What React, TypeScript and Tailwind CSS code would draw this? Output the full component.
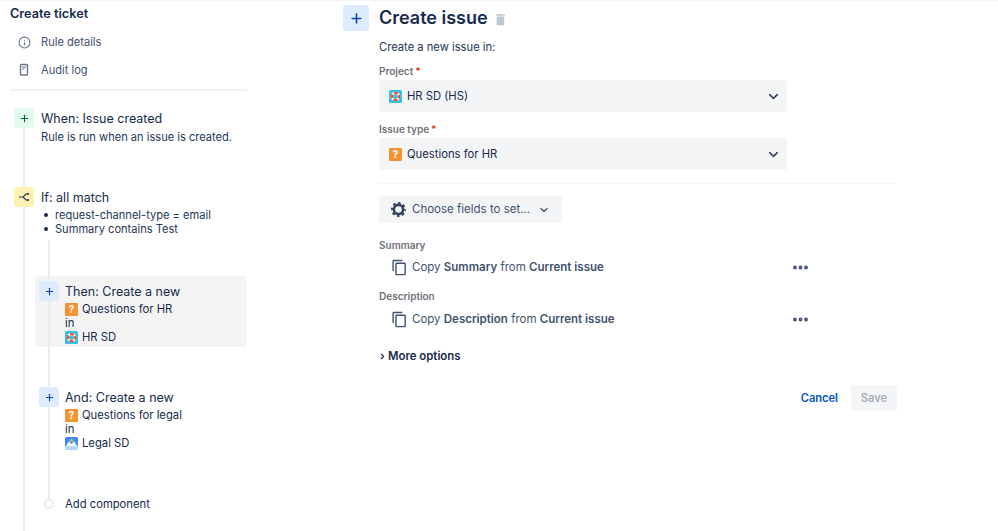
import { ChevronDown, ChevronRight, Info, MoreHorizontal, Plus } from "lucide-react";
import { MdContentCopy, MdDelete } from "react-icons/md";

const LifebuoyIcon = ({ size = 13 }: { size?: number }) => (
    <svg width={size} height={size} viewBox="0 0 16 16" className="shrink-0">
        <rect width="16" height="16" rx="2" fill="#2cc3e6" />
        <circle cx="8" cy="8" r="4.4" fill="none" stroke="#ffffff" strokeWidth="3" />
        <circle cx="8" cy="8" r="4.4" fill="none" stroke="#f0533f" strokeWidth="3" strokeDasharray="4.9 2" strokeDashoffset="2.45" />
    </svg>
);

const QuestionIcon = () => (
    <span className="flex h-[13px] w-[13px] shrink-0 items-center justify-center rounded-[1px] bg-[#f79232] text-[10px] font-bold leading-none text-white">
        ?
    </span>
);

const MountainIcon = () => (
    <svg width="13" height="13" viewBox="0 0 16 16" className="shrink-0">
        <rect width="16" height="16" rx="2" fill="#3d8bf5" />
        <circle cx="8" cy="4" r="1.5" fill="#f5cd47" />
        <path d="M0 13 L5 5 L8 9 L11 5 L16 13 V16 H0 Z" fill="#ffffff" />
        <path d="M0 11 H16 V14 a2 2 0 0 1 -2 2 H2 a2 2 0 0 1 -2 -2 Z" fill="#b3d4ff" />
    </svg>
);

const AuditIcon = () => (
    <svg width="14" height="14" viewBox="0 0 14 14" className="shrink-0">
        <rect x="3.5" y="1.5" width="7" height="10.5" rx="1" fill="none" stroke="#6b778c" strokeWidth="1.4" />
        <path d="M5 4 H9 M5 6 H7.5" stroke="#6b778c" strokeWidth="1.2" />
    </svg>
);

const BranchIcon = () => (
    <svg width="12" height="12" viewBox="0 0 12 12">
        <path d="M1 6 H5 M5 6 L8 3 H10 M5 6 L8 9 H10" fill="none" stroke="#253858" strokeWidth="1.2" />
        <circle cx="10" cy="3" r="1.1" fill="#253858" />
        <circle cx="10" cy="9" r="1.1" fill="#253858" />
    </svg>
);

const GearIcon = () => (
    <svg width="17" height="17" viewBox="0 0 17 17" className="mr-[5px] shrink-0">
        <circle cx="8.5" cy="8.5" r="4.6" fill="none" stroke="#344563" strokeWidth="2.6" />
        <circle cx="8.5" cy="8.5" r="6.4" fill="none" stroke="#344563" strokeWidth="2.2" strokeDasharray="2.5 2.53" strokeDashoffset="1.25" />
    </svg>
);

const Tile = ({ bg, children }: { bg: string; children: React.ReactNode }) => (
    <div className={`relative z-10 flex h-5 w-5 shrink-0 items-center justify-center rounded-[3px] ${bg}`}>
        {children}
    </div>
);

const PlusTile = () => (
    <Tile bg="bg-[#deebff]">
        <Plus size={11} strokeWidth={2.5} className="text-[#0747a6]" />
    </Tile>
);

const CreateStep = ({ title, type, project, icon }: { title: string; type: string; project: string; icon: React.ReactNode }) => (
    <div className="flex gap-[6px] pl-[4px]">
        <PlusTile />
        <div className="text-[11.25px] leading-[14px] text-[#172b4d]">
            <div className="pt-px text-[12.5px] leading-5">{title}</div>
            <div className="flex items-center gap-[4px]">
                <QuestionIcon />
                {type}
            </div>
            <div>in</div>
            <div className="flex items-center gap-[4px]">
                {icon}
                {project}
            </div>
        </div>
    </div>
);

const FieldLabel = ({ children, required }: { children: string; required?: boolean }) => (
    <div className="text-[10px] font-semibold leading-[14px] text-[#6f7279]">
        {children}
        {required && <span className="ml-[2px] text-[#de350b]">*</span>}
    </div>
);

const SelectBox = ({ icon, value }: { icon: React.ReactNode; value: string }) => (
    <div className="mt-[2px] flex h-8 w-[408px] items-center justify-between rounded-[3px] bg-[#f4f5f7] pl-[10px] pr-[6px] text-[11.25px] text-[#172b4d]">
        <div className="flex items-center gap-[5px]">
            {icon}
            {value}
        </div>
        <ChevronDown size={15} strokeWidth={2.5} className="text-[#344563]" />
    </div>
);

const CopyRow = ({ field }: { field: string }) => (
    <div className="flex w-[432px] items-center justify-between pl-[12px] pr-[1px] text-[11.5px] text-[#42526e]">
        <div className="flex items-center gap-[4px]">
            <MdContentCopy size={17} className="text-[#42526e]" />
            <span>
                Copy <b className="font-semibold">{field}</b> from <b className="font-semibold">Current issue</b>
            </span>
        </div>
        <MoreHorizontal size={19} strokeWidth={2.8} className="text-[#42526e]" />
    </div>
);

export default function App() {
    return (
        <div className="flex h-[531px] w-[998px] overflow-hidden border-t border-[#f4f5f7] bg-white font-['Inter',sans-serif]">
            <aside className="relative w-[343px] shrink-0 pl-[10px]">
                <h1 className="mt-[5px] text-[12.7px] font-semibold leading-[15px] text-[#172b4d]">Create ticket</h1>
                <div className="mt-[13px] flex items-center gap-[10px] pl-[8px] text-[11.1px] leading-4 text-[#42526e]">
                    <Info size={13} className="text-[#6b778c]" />
                    Rule details
                </div>
                <div className="mt-[12px] flex items-center gap-[10px] pl-[7px] text-[11.1px] leading-4 text-[#42526e]">
                    <AuditIcon />
                    Audit log
                </div>
                <div className="mt-[11px] h-[2px] w-[237px] bg-[#f0f1f3]" />

                {/* timeline */}
                <div className="relative mt-[17px] w-[237px]">
                    <div className="absolute left-[13px] top-0 h-[440px] w-[2px] bg-[#ebecf0]" />
                    <div className="flex gap-[7px] pl-[4px]">
                        <Tile bg="bg-[#e3fcef]">
                            <Plus size={11} strokeWidth={2.5} className="text-[#006644]" />
                        </Tile>
                        <div className="text-[#172b4d]">
                            <div className="pt-px text-[12.5px] leading-5">When: Issue created</div>
                            <div className="text-[11.1px] leading-4 text-[#253858]">Rule is run when an issue is created.</div>
                        </div>
                    </div>
                    <div className="mt-[42px] flex gap-[7px] pl-[4px]">
                        <Tile bg="bg-[#fff0b3]">
                            <BranchIcon />
                        </Tile>
                        <div className="text-[#172b4d]">
                            <div className="pt-px text-[12.5px] leading-5">If: all match</div>
                            <ul className="text-[11.1px] leading-[14px] text-[#253858]">
                                <li className="flex items-center gap-[7px] pl-[3px]">
                                    <span className="h-[4px] w-[4px] rounded-full bg-[#172b4d]" />
                                    request-channel-type = email
                                </li>
                                <li className="flex items-center gap-[7px] pl-[3px]">
                                    <span className="h-[4px] w-[4px] rounded-full bg-[#172b4d]" />
                                    Summary contains Test
                                </li>
                            </ul>
                        </div>
                    </div>

                    <div className="relative ml-[25px] mt-[40px]">
                        <div className="absolute left-[13px] top-[-36px] h-[260px] w-[2px] bg-[#ebecf0]" />
                        <div className="relative h-[71px] rounded-[4px] bg-[#f4f4f5] pt-[5px]">
                            <div className="absolute left-[13px] top-0 h-full w-[2px] bg-[#ebecf0]" />
                            <CreateStep title="Then: Create a new" type="Questions for HR" project="HR SD" icon={<LifebuoyIcon />} />
                        </div>
                        <div className="mt-[40px]">
                            <CreateStep title="And: Create a new" type="Questions for legal" project="Legal SD" icon={<MountainIcon />} />
                        </div>
                        <div className="relative z-10 mt-[46px] flex items-center gap-[11px] pl-[9px] text-[11.25px] leading-4 text-[#172b4d]">
                            <span className="h-[10px] w-[10px] rounded-full border-2 border-[#ebecf0] bg-white" />
                            Add component
                        </div>
                    </div>
                </div>
            </aside>

            <main className="flex-1">
                <div className="mt-[4px] flex gap-[10px]">
                    <div className="flex h-[26px] w-[26px] items-center justify-center rounded-[3px] bg-[#deebff]">
                        <Plus size={15} strokeWidth={2.5} className="text-[#0747a6]" />
                    </div>
                    <div className="flex items-center gap-[5px]">
                        <h2 className="text-[18px] font-semibold leading-6 text-[#172b4d]">Create issue</h2>
                        <MdDelete size={15} className="mt-[2px] text-[#c1c7d0]" />
                    </div>
                </div>
                <div className="ml-[36px]">
                    <p className="mt-[8px] text-[11.2px] leading-4 text-[#253858]">Create a new issue in:</p>
                    <div className="mt-[9px]">
                        <FieldLabel required>Project</FieldLabel>
                    </div>
                    <SelectBox icon={<LifebuoyIcon />} value="HR SD (HS)" />
                    <div className="mt-[10px]">
                        <FieldLabel required>Issue type</FieldLabel>
                    </div>
                    <SelectBox icon={<QuestionIcon />} value="Questions for HR" />
                    <div className="mt-[13px] h-px w-[518px] bg-[#f4f5f7]" />
                    <div className="mt-[12px] flex h-[27px] w-[183px] items-center rounded-[3px] bg-[#f4f5f7] pl-[11px] text-[11.5px] text-[#42526e]">
                        <GearIcon />
                        Choose fields to set...
                        <ChevronDown size={12} strokeWidth={2.5} className="ml-[8px]" />
                    </div>
                    <div className="mt-[15px]">
                        <FieldLabel>Summary</FieldLabel>
                    </div>
                    <div className="mt-[6px]">
                        <CopyRow field="Summary" />
                    </div>
                    <div className="mt-[12px]">
                        <FieldLabel>Description</FieldLabel>
                    </div>
                    <div className="mt-[7px]">
                        <CopyRow field="Description" />
                    </div>
                    <div className="mt-[19px] flex items-center gap-[1px] text-[11.4px] font-semibold leading-4 text-[#172b4d]">
                        <ChevronRight size={9} strokeWidth={3} className="-ml-px" />
                        More options
                    </div>
                    <div className="mt-[21px] flex w-[518px] items-center justify-end gap-[13px] text-[11.1px] font-semibold">
                        <span className="text-[#0052cc]">Cancel</span>
                        <span className="flex h-[26px] w-[46px] items-center justify-center rounded-[3px] bg-[#f4f5f7] text-[#a5adba]">Save</span>
                    </div>
                </div>
            </main>
        </div>
    );
}
